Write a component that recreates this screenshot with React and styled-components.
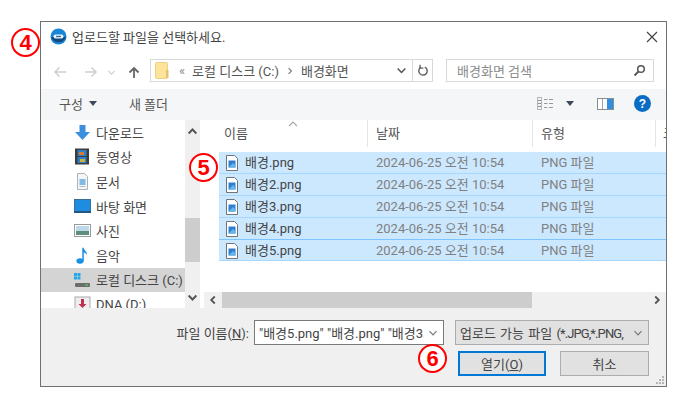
import React from 'react';
import styled, { createGlobalStyle } from 'styled-components';

const GlobalStyle = createGlobalStyle`
  html, body {
    margin: 0;
    padding: 0;
    background: #fff;
  }
  * {
    box-sizing: border-box;
  }
`;

const Page = styled.div`
  width: 693px;
  height: 410px;
  padding: 21px 0 0 40px;
  font-family: Roboto, "Noto Sans CJK KR", "Noto Sans", sans-serif;
  font-size: 13px;
  color: #333;
  overflow: hidden;
`;

const Dialog = styled.div`
  position: relative;
  width: 627px;
  height: 366px;
  border: 1px solid #707070;
  background: #fff;
  display: flex;
  flex-direction: column;
`;

const Badge = styled.div`
  position: absolute;
  left: ${p => p.$x}px;
  top: ${p => p.$y}px;
  width: 29px;
  height: 29px;
  border: 2px solid #f00;
  border-radius: 50%;
  background: #fff;
  color: #f00;
  font-family: "Liberation Sans", sans-serif;
  font-size: 22px;
  font-weight: 700;
  line-height: 25px;
  text-align: center;
  z-index: 2;
`;

const TitleBar = styled.div`
  height: 33px;
  padding: 0 8px 4px 9px;
  display: flex;
  align-items: center;
  gap: 5px;
  flex-shrink: 0;
`;

const TitleText = styled.span`
  flex: 1;
  color: #444;
  padding-bottom: 1px;
`;

const NavBar = styled.div`
  height: 34px;
  padding: 4px 11px 7px 109px;
  position: relative;
  display: flex;
  gap: 13px;
  flex-shrink: 0;
`;

const NavButtons = styled.div`
  position: absolute;
  left: 11px;
  top: 7px;
  width: 92px;
  height: 20px;
  display: flex;
  align-items: center;
`;

const InputBox = styled.div`
  height: 23px;
  border: 1px solid #d9d9d9;
  background: #fff;
  display: flex;
  align-items: center;
  color: ${p => p.$muted ? '#8a8a8a' : '#444'};
  width: ${p => p.$w}px;
  padding-left: ${p => p.$pad || 0}px;
`;

const Crumbs = styled.div`
  flex: 1;
  display: flex;
  align-items: center;
  gap: 7px;
  color: #555;
  white-space: nowrap;
`;

const RefreshCell = styled.div`
  width: 20px;
  height: 100%;
  border-left: 1px solid #d9d9d9;
  display: flex;
  align-items: center;
  justify-content: center;
`;

const Toolbar = styled.div`
  height: 31px;
  background: #f5f6f7;
  padding: 0 15px 2px 18px;
  display: flex;
  align-items: center;
  flex-shrink: 0;
  color: #555;
`;

const ToolButton = styled.span`
  display: inline-flex;
  align-items: center;
  gap: 6px;
  margin-right: ${p => p.$mr || 0}px;
`;

const Spacer = styled.div`
  flex: 1;
`;

const Main = styled.div`
  flex: 1;
  min-height: 0;
  display: flex;
`;

const Sidebar = styled.div`
  width: 144px;
  overflow: hidden;
`;

const NavItem = styled.div`
  height: 24.6px;
  padding-left: 33px;
  display: flex;
  align-items: center;
  gap: 5px;
  white-space: nowrap;
  color: #444;
  background: ${p => p.$active ? '#d4d4d4' : 'transparent'};
`;

const VScroll = styled.div`
  width: 15px;
  background: #f0f0f0;
  display: flex;
  flex-direction: column;
  align-items: center;
  justify-content: space-between;
  padding: 6px 0 5px;
  position: relative;
`;

const VThumb = styled.div`
  position: absolute;
  left: 0;
  top: 98px;
  width: 15px;
  height: 44px;
  background: #cdcdcd;
`;

const ListPane = styled.div`
  flex: 1;
  min-width: 0;
  display: flex;
  flex-direction: column;
  padding-left: 1px;
  overflow: hidden;
`;

const ListHeader = styled.div`
  position: relative;
  height: 27px;
  display: flex;
  flex-shrink: 0;
  color: #555;
`;

const HeaderCell = styled.div`
  width: ${p => p.$w}px;
  flex-shrink: 0;
  padding-left: ${p => p.$pad}px;
  padding-bottom: 2px;
  border-right: 1px solid #e5e5e5;
  display: flex;
  align-items: center;
  white-space: nowrap;
  overflow: hidden;
`;

const SortCaret = styled.svg`
  position: absolute;
  left: 87px;
  top: 1px;
`;

const Rows = styled.div`
  flex: 1;
  padding: 5px 0 0 18px;
  overflow: hidden;
`;

const Row = styled.div`
  height: 22px;
  width: 470px;
  background: #cce8ff;
  border-bottom: 1px solid #a6d8ff;
  border-top: ${p => p.$focus ? '1px solid #7ec4ff' : 'none'};
  margin-top: ${p => p.$focus ? '-1px' : '0'};
  display: grid;
  grid-template-columns: 157px 165px 1fr;
  align-items: center;
  white-space: nowrap;
`;

const NameCell = styled.div`
  display: flex;
  align-items: center;
  gap: 7px;
  padding-left: 7px;
  color: #444;
`;

const NameText = styled.span`
  padding-bottom: 2px;
`;

const DimCell = styled.div`
  color: #808080;
  padding-bottom: 2px;
`;

const HScroll = styled.div`
  height: 16px;
  margin-left: 3px;
  background: #f0f0f0;
  display: flex;
  align-items: center;
  flex-shrink: 0;
`;

const HArrow = styled.div`
  width: 18px;
  display: flex;
  justify-content: center;
`;

const HThumb = styled.div`
  width: 310px;
  height: 16px;
  background: #cdcdcd;
`;

const Footer = styled.div`
  position: relative;
  height: 78px;
  background: #f0f0f0;
  padding: 12px 17px 0 0;
  flex-shrink: 0;
  display: flex;
  flex-direction: column;
  align-items: flex-end;
  gap: 6px;
`;

const FooterRow = styled.div`
  display: flex;
  align-items: center;
  color: #444;
  gap: ${p => p.$gap || 0}px;
`;

const FileLabel = styled.label`
  margin-right: 5px;
  color: #444;
  white-space: nowrap;
`;

const FileInput = styled.div`
  width: 190px;
  height: 25px;
  border: 1px solid #7a7a7a;
  background: #fff;
  padding: 0 5px 0 4px;
  display: flex;
  align-items: center;
  justify-content: space-between;
  white-space: nowrap;
  overflow: hidden;
`;

const FileValue = styled.span`
  width: 165px;
  overflow: hidden;
`;

const FilterSelect = styled.div`
  width: 194px;
  height: 25px;
  margin-left: 11px;
  border: 1px solid #adadad;
  background: #e1e1e1;
  padding: 0 5px 0 4px;
  display: flex;
  align-items: center;
  justify-content: space-between;
  white-space: nowrap;
  overflow: hidden;
`;

const FilterValue = styled.span`
  width: 172px;
  word-spacing: 1px;
  overflow: hidden;
`;

const TightLatin = styled.span`
  letter-spacing: -0.9px;
`;

const PushButton = styled.button`
  width: ${p => p.$w}px;
  height: 25px;
  padding: 0;
  background: #e1e1e1;
  border: ${p => p.$primary ? '2px solid #0078d7' : '1px solid #adadad'};
  font: inherit;
  color: #444;
`;

const Grip = styled.svg`
  position: absolute;
  right: 1px;
  bottom: 1px;
`;

const Mnemonic = styled.span`
  text-decoration: underline;
`;

const Chevron = ({ dir = 'down', color = '#555', size = 10, width = 1.4 }) => {
  const paths = {
    down: 'M1.5 3.2 5 6.8 8.5 3.2',
    up: 'M1.5 6.8 5 3.2 8.5 6.8',
    left: 'M6.8 1.5 3.2 5 6.8 8.5',
    right: 'M3.2 1.5 6.8 5 3.2 8.5',
  };
  return (
    <svg width={size} height={size} viewBox="0 0 10 10" fill="none">
      <path d={paths[dir]} stroke={color} strokeWidth={width} />
    </svg>
  );
};

const Caret = ({ color = '#3c4a5c' }) => (
  <svg width="8" height="5" viewBox="0 0 8 5"><path d="M0 0h8L4 5z" fill={color} /></svg>
);

const AppIcon = () => (
  <svg width="17" height="17" viewBox="0 0 17 17">
    <circle cx="8.5" cy="8.5" r="8" fill="#1c86d6" />
    <path d="M1 9a8 8 0 0 0 15 0z" fill="#14497e" />
    <rect x="3.5" y="6.5" width="10" height="4" rx="2" fill="#e8f3fb" />
    <rect x="6" y="7.8" width="5" height="1.4" fill="#3d6fa0" />
  </svg>
);

const NavArrow = ({ dir, color, ml }) => (
  <svg width="14" height="12" viewBox="0 0 14 12" fill="none" style={{ marginLeft: ml }}>
    {dir === 'left' && <path d="M13 6H2M6.5 1.5 2 6l4.5 4.5" stroke={color} strokeWidth="1.5" />}
    {dir === 'right' && <path d="M1 6h11M7.5 1.5 12 6l-4.5 4.5" stroke={color} strokeWidth="1.5" />}
    {dir === 'up' && <path d="M7 12V2M2.5 6.5 7 2l4.5 4.5" stroke={color} strokeWidth="1.8" />}
  </svg>
);

const FolderIcon = () => (
  <svg width="14" height="17" viewBox="0 0 14 17" style={{ marginRight: 3 }}>
    <rect x="0.5" y="0.5" width="12" height="16" rx="1" fill="#fde49a" stroke="#ecd084" />
    <rect x="11" y="8" width="2.5" height="8" fill="#e3c26f" />
  </svg>
);

const Refresh = () => (
  <svg width="12" height="13" viewBox="0 0 12 13" fill="none">
    <path d="M4 3.2a4.2 4.2 0 1 0 3.8-.1" stroke="#666" strokeWidth="1.5" />
    <path d="M3 .8v3.4h3.4" stroke="#666" strokeWidth="1.3" />
  </svg>
);

const SearchIcon = () => (
  <svg width="13" height="13" viewBox="0 0 13 13" fill="none">
    <circle cx="8" cy="5" r="3.3" stroke="#555" strokeWidth="1.5" />
    <path d="M5.5 7.5 1.5 11.5" stroke="#555" strokeWidth="1.8" />
  </svg>
);

const ViewsIcon = () => (
  <svg width="17" height="13" viewBox="0 0 17 13" fill="none">
    <rect x="0.5" y="0.5" width="4" height="12" fill="#f4f4f4" stroke="#b5b5b5" />
    <path d="M1 3.5h3M1 6.5h3M1 9.5h3" stroke="#8f8f8f" />
    <path d="M7 2.5h3.5M12 2.5h4M7 6.5h3.5M12 6.5h4M7 10.5h3.5M12 10.5h4" stroke="#9a9a9a" strokeWidth="1.2" />
  </svg>
);

const PaneIcon = () => (
  <svg width="17" height="12" viewBox="0 0 17 12">
    <rect x="0.5" y="0.5" width="16" height="11" fill="#fff" stroke="#8d8d8d" />
    <rect x="10" y="1" width="6" height="10" fill="#2f8fe0" />
    <rect x="5" y="1" width="1" height="10" fill="#a5a5a5" />
  </svg>
);

const HelpIcon = () => (
  <svg width="17" height="17" viewBox="0 0 17 17">
    <circle cx="8.5" cy="8.5" r="8.5" fill="#0a6cc4" />
    <text x="8.5" y="13" textAnchor="middle" fontFamily="Liberation Sans, sans-serif" fontWeight="700" fontSize="12" fill="#fff">?</text>
  </svg>
);

const SideIcon = ({ kind }) => {
  if (kind === 'download') return (
    <svg width="17" height="17" viewBox="0 0 17 17">
      <path d="M5.5 1h6v7H16l-7.5 8L1 8h4.5z" fill="#3b8fdc" />
    </svg>
  );
  if (kind === 'video') return (
    <svg width="17" height="17" viewBox="0 0 17 17">
      <rect x="1" y="0.5" width="14" height="16" fill="#3c3c3c" />
      <rect x="3.5" y="2" width="9" height="6" fill="#2f7fc8" />
      <rect x="3.5" y="9" width="9" height="6" fill="#2f7fc8" />
      <rect x="5" y="4" width="5" height="3" fill="#d9792c" />
      <rect x="6" y="11" width="5" height="3" fill="#c9b23a" />
    </svg>
  );
  if (kind === 'doc') return (
    <svg width="17" height="17" viewBox="0 0 17 17">
      <path d="M3.5.5h7l3 3v13h-10z" fill="#f3f6f9" stroke="#aab2ba" />
      <rect x="5.5" y="6" width="6" height="6" fill="#7fb9e4" />
      <rect x="5.5" y="13" width="6" height="1" fill="#b5bcc2" />
    </svg>
  );
  if (kind === 'desktop') return (
    <svg width="17" height="14" viewBox="0 0 17 14">
      <rect x="0.5" y="0.5" width="16" height="13" fill="#1e8de0" stroke="#3a6f9c" />
      <rect x="0" y="12" width="17" height="2" fill="#26557f" />
    </svg>
  );
  if (kind === 'photo') return (
    <svg width="17" height="13" viewBox="0 0 17 13">
      <rect x="0.5" y="0.5" width="16" height="12" fill="#fff" stroke="#9a9a9a" />
      <rect x="2" y="2" width="13" height="5" fill="#bcd8ea" />
      <path d="M2 7h13v4H2z" fill="#5e8f7c" />
    </svg>
  );
  if (kind === 'music') return (
    <svg width="17" height="17" viewBox="0 0 17 17">
      <ellipse cx="6" cy="14" rx="3.6" ry="2.7" fill="#1a8fe6" />
      <path d="M8.3 14V.8h1.4c.4 2.6 3.3 3.6 3.3 7-1-1.6-2.2-2.2-3.2-2.4V14z" fill="#1a8fe6" />
    </svg>
  );
  if (kind === 'drive') return (
    <svg width="17" height="17" viewBox="0 0 17 17">
      <rect x="0" y="2" width="3" height="3" fill="#22a7ea" />
      <rect x="3.5" y="2" width="3" height="3" fill="#22a7ea" />
      <rect x="0" y="5.5" width="3" height="3" fill="#22a7ea" />
      <rect x="3.5" y="5.5" width="3" height="3" fill="#22a7ea" />
      <rect x="1" y="12" width="15" height="4" rx="1" fill="#6b6f6b" />
      <rect x="11" y="13.5" width="3" height="1.2" fill="#57d05a" />
    </svg>
  );
  return (
    <svg width="17" height="17" viewBox="0 0 17 17">
      <rect x="1" y="1" width="15" height="15" fill="#eee" stroke="#aaa" />
      <path d="M7 3h3v5h2.5l-4 4-4-4H7z" fill="#c0304a" />
    </svg>
  );
};

const PngIcon = () => (
  <svg width="12" height="16" viewBox="0 0 12 16" fill="none">
    <path d="M.5.5h8l3 3v12H.5z" fill="#fff" stroke="#6f7479" />
    <rect x="2.5" y="5.5" width="7" height="7" fill="#2f7fd0" />
    <path d="M2.5 12.5 7 8l2.5 2.5v2z" fill="#63b6ea" />
  </svg>
);

const navItems = [
  ['download', '다운로드'],
  ['video', '동영상'],
  ['doc', '문서'],
  ['desktop', '바탕 화면'],
  ['photo', '사진'],
  ['music', '음악'],
  ['drive', '로컬 디스크 (C:)'],
  ['dna', 'DNA (D:)'],
];

const files = ['배경.png', '배경2.png', '배경3.png', '배경4.png', '배경5.png'];

export default function App() {
  return (
    <Page>
      <GlobalStyle />
      <Dialog>
        <Badge $x={-30} $y={6}>4</Badge>
        <Badge $x={148} $y={131}>5</Badge>
        <Badge $x={377} $y={322}>6</Badge>

        <TitleBar>
          <AppIcon />
          <TitleText>업로드할 파일을 선택하세요.</TitleText>
          <svg width="12" height="12" viewBox="0 0 12 12" fill="none">
            <path d="M1 1l10 10M11 1 1 11" stroke="#444" strokeWidth="1.2" />
          </svg>
        </TitleBar>

        <NavBar>
          <NavButtons>
            <NavArrow dir="left" color="#cfcfcf" ml={1} />
            <NavArrow dir="right" color="#cfcfcf" ml={17} />
            <span style={{ marginLeft: 9, display: 'flex' }}><Chevron color="#cfcfcf" size={9} /></span>
            <NavArrow dir="up" color="#666" ml={11} />
          </NavButtons>
          <InputBox $w={283} $pad={4}>
            <Crumbs>
              <FolderIcon />
              <span style={{ color: '#888' }}>«</span>
              <span>로컬 디스크 (C:)</span>
              <Chevron dir="right" color="#777" size={8} />
              <span>배경화면</span>
            </Crumbs>
            <span style={{ display: 'flex', marginRight: 5 }}><Chevron size={11} /></span>
            <RefreshCell><Refresh /></RefreshCell>
          </InputBox>
          <InputBox $w={208} $pad={10} $muted>
            <span style={{ flex: 1 }}>배경화면 검색</span>
            <span style={{ display: 'flex', marginRight: 7 }}><SearchIcon /></span>
          </InputBox>
        </NavBar>

        <Toolbar>
          <ToolButton $mr={32}>구성 <Caret /></ToolButton>
          <ToolButton>새 폴더</ToolButton>
          <Spacer />
          <ToolButton $mr={23}><ViewsIcon /><span style={{ width: 0 }} /><Caret /></ToolButton>
          <ToolButton $mr={20}><PaneIcon /></ToolButton>
          <HelpIcon />
        </Toolbar>

        <Main>
          <Sidebar>
            {navItems.map(([kind, label]) => (
              <NavItem key={label} $active={kind === 'drive'}>
                <SideIcon kind={kind} />
                <span>{label}</span>
              </NavItem>
            ))}
          </Sidebar>
          <VScroll>
            <VThumb />
            <Chevron dir="up" color="#555" size={11} width={1.8} />
            <Chevron dir="down" color="#555" size={11} width={1.8} />
          </VScroll>
          <ListPane>
            <ListHeader>
              <SortCaret width="10" height="6" viewBox="0 0 10 6" fill="none">
                <path d="M1 5l4-4 4 4" stroke="#aaa" strokeWidth="1.2" />
              </SortCaret>
              <HeaderCell $w={167} $pad={23}>이름</HeaderCell>
              <HeaderCell $w={165} $pad={8}>날짜</HeaderCell>
              <HeaderCell $w={123} $pad={8}>유형</HeaderCell>
              <HeaderCell $w={40} $pad={7}>크기</HeaderCell>
            </ListHeader>
            <Rows>
              {files.map((name, i) => (
                <Row key={name} $focus={i === 4}>
                  <NameCell><PngIcon /><NameText>{name}</NameText></NameCell>
                  <DimCell>2024-06-25 오전 10:54</DimCell>
                  <DimCell>PNG 파일</DimCell>
                </Row>
              ))}
            </Rows>
            <HScroll>
              <HArrow><Chevron dir="left" size={10} width={1.8} /></HArrow>
              <HThumb />
              <Spacer />
              <HArrow><Chevron dir="right" size={10} width={1.8} /></HArrow>
            </HScroll>
          </ListPane>
        </Main>

        <Footer>
          <FooterRow>
            <FileLabel>파일 이름(<Mnemonic>N</Mnemonic>):</FileLabel>
            <FileInput>
              <FileValue>"배경5.png" "배경.png" "배경3.png"</FileValue>
              <Chevron color="#777" size={10} width={1.2} />
            </FileInput>
            <FilterSelect>
              <FilterValue>업로드 가능 파일 <TightLatin>(*.JPG,*.PNG,</TightLatin></FilterValue>
              <Chevron color="#777" size={10} width={1.2} />
            </FilterSelect>
          </FooterRow>
          <FooterRow $gap={14}>
            <PushButton $w={88} $primary>열기(<Mnemonic>O</Mnemonic>)</PushButton>
            <PushButton $w={89}>취소</PushButton>
          </FooterRow>
          <Grip width="10" height="10" viewBox="0 0 10 10" fill="#b5b5b5">
            <rect x="7" y="1" width="2" height="2" />
            <rect x="4" y="4" width="2" height="2" />
            <rect x="7" y="4" width="2" height="2" />
            <rect x="1" y="7" width="2" height="2" />
            <rect x="4" y="7" width="2" height="2" />
            <rect x="7" y="7" width="2" height="2" />
          </Grip>
        </Footer>
      </Dialog>
    </Page>
  );
}
